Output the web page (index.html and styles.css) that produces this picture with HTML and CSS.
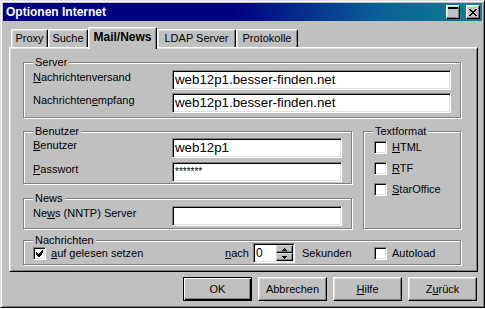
FILE: index.html
```html
<!DOCTYPE html>
<html lang="de">

<head>
    <meta charset="UTF-8">
    <title>Optionen Internet</title>
    <link rel="stylesheet" href="styles.css">
</head>

<body>
    <div class="window">
        <div class="titlebar">
            <span class="title">Optionen Internet</span>
            <div class="caption-buttons">
                <div class="caption-btn rollup">
                    <svg width="10" height="2" viewBox="0 0 10 2"><rect width="10" height="2" fill="#000" /></svg>
                </div>
                <div class="caption-btn">
                    <svg width="8" height="7" viewBox="0 0 8 7">
                        <path d="M0 0h2v1H0zM6 0h2v1H6zM1 1h2v1H1zM5 1h2v1H5zM2 2h4v1H2zM3 3h2v1H3zM2 4h4v1H2zM1 5h2v1H1zM5 5h2v1H5zM0 6h2v1H0zM6 6h2v1H6z" fill="#000" />
                    </svg>
                </div>
            </div>
        </div>

        <div class="tabs">
            <div class="tab tab-proxy">Proxy</div>
            <div class="tab tab-suche">Suche</div>
            <div class="tab tab-mail active">Mail/News</div>
            <div class="tab tab-ldap">LDAP Server</div>
            <div class="tab tab-proto">Protokolle</div>
        </div>

        <div class="panel">
            <fieldset class="group server">
                <legend>Server</legend>
                <div class="field-row">
                    <label><u>N</u>achrichtenversand</label>
                    <div class="field">web12p1.besser-finden.net</div>
                </div>
                <div class="field-row">
                    <label>Nachrichten<u>e</u>mpfang</label>
                    <div class="field">web12p1.besser-finden.net</div>
                </div>
            </fieldset>

            <div class="middle">
                <div class="left-col">
                    <fieldset class="group user">
                        <legend>Benutzer</legend>
                        <div class="field-row">
                            <label><u>B</u>enutzer</label>
                            <div class="field">web12p1</div>
                        </div>
                        <div class="field-row">
                            <label><u>P</u>asswort</label>
                            <div class="field password">*******</div>
                        </div>
                    </fieldset>
                    <fieldset class="group news">
                        <legend>News</legend>
                        <div class="field-row">
                            <label>Ne<u>w</u>s (NNTP) Server</label>
                            <div class="field"></div>
                        </div>
                    </fieldset>
                </div>
                <fieldset class="group textformat">
                    <legend>Textformat</legend>
                    <div class="opt"><span class="check"></span><span><u>H</u>TML</span></div>
                    <div class="opt"><span class="check"></span><span><u>R</u>TF</span></div>
                    <div class="opt"><span class="check"></span><span><u>S</u>tarOffice</span></div>
                </fieldset>
            </div>

            <fieldset class="group messages">
                <legend>Nachrichten</legend>
                <div class="msg-row">
                    <div class="opt read">
                        <span class="check">
                            <svg width="7" height="7" viewBox="0 0 7 7">
                                <path d="M6 0h1v3H6zM5 1h1v4H5zM4 2h1v4H4zM0 2h1v3H0zM1 3h1v3H1zM3 3h1v4H3zM2 4h1v3H2z" fill="#000" />
                            </svg>
                        </span>
                        <span><u>a</u>uf gelesen setzen</span>
                    </div>
                    <span class="nach"><u>n</u>ach</span>
                    <div class="spin">
                        <div class="spin-value">0</div>
                        <div class="spin-btns">
                            <div class="spin-btn"><svg width="5" height="3" viewBox="0 0 5 3"><path d="M2 0h1v1H2zM1 1h3v1H1zM0 2h5v1H0z" fill="#000" /></svg></div>
                            <div class="spin-btn"><svg width="5" height="3" viewBox="0 0 5 3"><path d="M0 0h5v1H0zM1 1h3v1H1zM2 2h1v1H2z" fill="#000" /></svg></div>
                        </div>
                    </div>
                    <span class="sek">Sekunden</span>
                    <div class="opt"><span class="check"></span><span>Autoload</span></div>
                </div>
            </fieldset>
        </div>

        <div class="buttons">
            <div class="btn default">OK</div>
            <div class="btn">Abbrechen</div>
            <div class="btn"><u>H</u>ilfe</div>
            <div class="btn">Z<u>u</u>rück</div>
        </div>
    </div>
</body>

</html>
```

FILE: styles.css
```css
body {
    margin: 0;
    background: #ffffff;
    color: #000000;
    font-family: "Liberation Sans", Arial, sans-serif;
    font-size: 11px;
}

.window {
    box-sizing: border-box;
    width: 485px;
    height: 308px;
    background: #c0c0c0;
    border: 1px solid;
    border-color: #dfdfdf #000000 #000000 #dfdfdf;
    box-shadow: inset 1px 1px #ffffff, inset -1px -1px #808080;
    padding: 2px;
}

/* title bar */
.titlebar {
    height: 18px;
    display: flex;
    align-items: center;
    justify-content: space-between;
    padding-left: 3px;
    background: linear-gradient(to right, #000080 0%, #000080 48%, #0a5e98 78%, #0e8294 100%);
}

.title {
    color: #ffffff;
    font-weight: bold;
    font-size: 12px;
    line-height: 18px;
}

.caption-buttons {
    display: flex;
    gap: 6px;
    margin-right: 2px;
}

.caption-btn {
    box-sizing: border-box;
    width: 14px;
    height: 14px;
    background: #c0c0c0;
    border: 1px solid;
    border-color: #ffffff #000000 #000000 #ffffff;
    box-shadow: inset -1px -1px #808080, inset 1px 1px #dfdfdf;
    display: flex;
    align-items: center;
    justify-content: center;
}

.caption-btn.rollup {
    align-items: flex-start;
    justify-content: flex-start;
    padding: 1px 0 0 1px;
}

.caption-btn svg {
    display: block;
}

/* tabs */
.tabs {
    display: flex;
    align-items: flex-end;
    height: 20px;
    margin: 6px 0 0 6px;
    padding-left: 2px;
}

.tab {
    box-sizing: border-box;
    height: 18px;
    border: 1px solid;
    border-bottom: none;
    border-color: #ffffff #000000 #ffffff #ffffff;
    border-radius: 2px 2px 0 0;
    box-shadow: inset -1px 0 #808080, inset 1px 1px #dfdfdf;
    background: #c0c0c0;
    text-align: center;
    line-height: 17px;
    white-space: nowrap;
}

.tab-proxy { width: 37px; }
.tab-suche { width: 40px; }
.tab-mail { width: 69px; }
.tab-ldap { width: 79px; }
.tab-proto { width: 62px; }

.tab.active {
    position: relative;
    z-index: 1;
    height: 22px;
    margin-bottom: -2px;
    padding-top: 1px;
    font-weight: bold;
    font-size: 12px;
}

/* panel */
.panel {
    box-sizing: border-box;
    height: 225px;
    margin: 0 4px 0 6px;
    border: 1px solid;
    border-color: #ffffff #000000 #000000 #ffffff;
    box-shadow: inset 1px 1px #dfdfdf, inset -1px -1px #808080;
    padding: 8px 16px 6px 13px;
    display: flex;
    flex-direction: column;
}

.group {
    box-sizing: border-box;
    margin: 0;
    padding: 0 9px;
    min-width: 0;
    border: 1px solid #808080;
    box-shadow: 1px 1px 0 #ffffff, inset 1px 1px 0 #ffffff;
}

.group legend {
    padding: 0 2px;
    height: 13px;
    line-height: 13px;
    background: #c0c0c0;
}

.field-row {
    display: flex;
    align-items: flex-start;
}

.field-row label {
    width: 139px;
    flex: none;
    padding-top: 1px;
    line-height: 13px;
}

.field {
    box-sizing: border-box;
    height: 20px;
    background: #ffffff;
    border: 1px solid;
    border-color: #808080 #ffffff #ffffff #808080;
    box-shadow: inset 1px 1px #000000, inset -1px -1px #dfdfdf;
    padding: 1px 0 0 2px;
    font-size: 13.3px;
    line-height: 16px;
    white-space: nowrap;
    overflow: hidden;
}

.field.password {
    font-size: 10px;
}

.server {
    padding-top: 1px;
    padding-bottom: 4px;
}

.server .field-row + .field-row {
    margin-top: 3px;
}

.server .field {
    width: 280px;
}

.middle {
    display: flex;
    gap: 11px;
    height: 104px;
    margin-top: 7px;
}

.left-col {
    width: 329px;
    display: flex;
    flex-direction: column;
    gap: 8px;
}

.user {
    padding-bottom: 1px;
}

.user .field-row + .field-row {
    margin-top: 4px;
}

.user .field,
.news .field {
    width: 170px;
}

.news {
    padding-top: 1px;
    padding-bottom: 2px;
}

.textformat {
    width: 99px;
}

.textformat .opt {
    margin-left: 1px;
    margin-top: 8px;
}

.textformat .opt:first-of-type {
    margin-top: 3px;
}

/* checkboxes */
.opt {
    display: flex;
    align-items: center;
    gap: 5px;
    line-height: 13px;
}

.check {
    box-sizing: border-box;
    flex: none;
    width: 13px;
    height: 13px;
    background: #ffffff;
    border: 1px solid;
    border-color: #808080 #ffffff #ffffff #808080;
    box-shadow: inset 1px 1px #000000, inset -1px -1px #dfdfdf;
    display: flex;
    align-items: center;
    justify-content: center;
}

.check svg {
    display: block;
}

/* nachrichten row */
.messages {
    margin-top: 5px;
    padding-bottom: 1px;
}

.msg-row {
    display: flex;
    align-items: center;
    height: 20px;
    margin-top: -4px;
}

.read {
    width: 192px;
    flex: none;
}

.nach {
    width: 28px;
    flex: none;
}

.spin {
    box-sizing: border-box;
    display: flex;
    width: 42px;
    height: 20px;
    flex: none;
    background: #ffffff;
    border: 1px solid;
    border-color: #808080 #ffffff #ffffff #808080;
    box-shadow: inset 1px 1px #000000, inset -1px -1px #dfdfdf;
    padding: 1px;
}

.spin-value {
    flex: 1;
    padding-left: 1px;
    font-size: 12px;
    line-height: 16px;
}

.spin-btns {
    width: 17px;
    display: flex;
    flex-direction: column;
}

.spin-btn {
    box-sizing: border-box;
    height: 8px;
    background: #c0c0c0;
    border: 1px solid;
    border-color: #dfdfdf #000000 #000000 #dfdfdf;
    box-shadow: inset -1px -1px #808080;
    display: flex;
    align-items: center;
    justify-content: center;
}

.spin-btn svg {
    display: block;
}

.sek {
    width: 72px;
    flex: none;
    margin-left: 7px;
}

/* dialog buttons */
.buttons {
    display: flex;
    justify-content: flex-end;
    gap: 6px;
    margin: 5px 5px 0 0;
}

.btn {
    box-sizing: border-box;
    width: 69px;
    height: 24px;
    border: 1px solid;
    border-color: #ffffff #000000 #000000 #ffffff;
    box-shadow: inset -1px -1px #808080, inset 1px 1px #dfdfdf;
    text-align: center;
    line-height: 22px;
    font-size: 11px;
}

.btn.default {
    border-color: #000000;
    box-shadow: inset 1px 1px #ffffff, inset -1px -1px #000000, inset -2px -2px #808080;
}
```
